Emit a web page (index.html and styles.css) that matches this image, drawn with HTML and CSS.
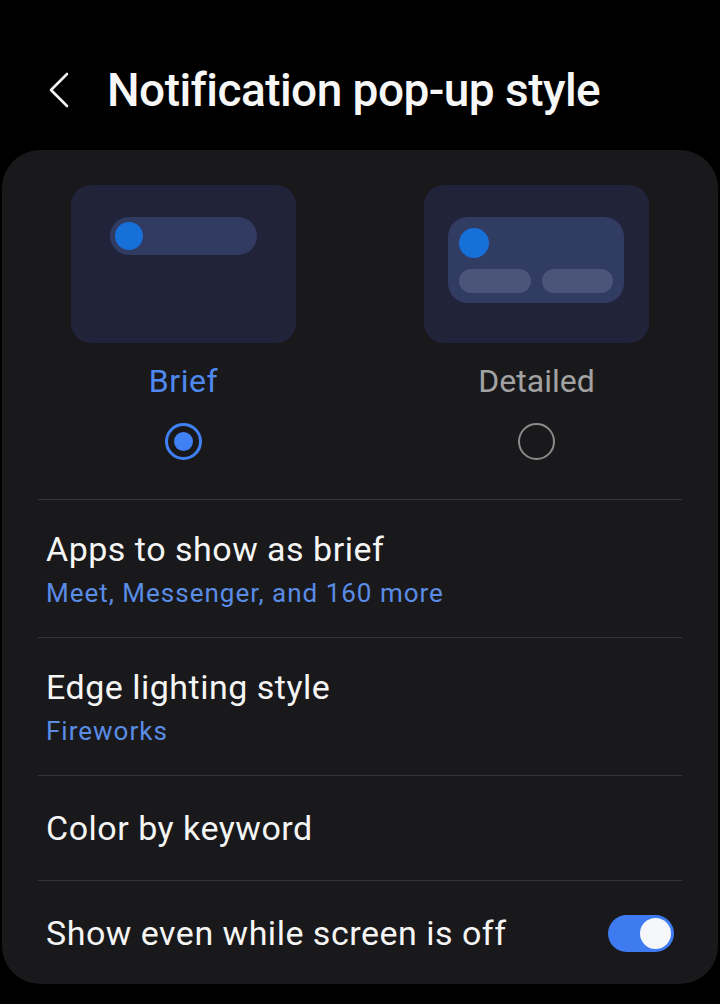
FILE: index.html
```html
<!DOCTYPE html>
<html>
	<head>
		<meta charset="UTF-8" />
		<title>Notification pop-up style</title>
		<link rel="stylesheet" href="styles.css">
	</head>
	<body>
		<div class="header">
			<svg class="back" width="22" height="36" viewBox="0 0 22 36">
				<polyline points="19,2 3,18 19,34" fill="none" stroke="#f2f2f2" stroke-width="2.6" stroke-linecap="round" stroke-linejoin="round" />
			</svg>
			<h1 class="title">Notification pop-up style</h1>
		</div>

		<div class="card">
			<div class="styles">
				<div class="option">
					<div class="preview">
						<div class="brief-pill">
							<span class="dot"></span>
						</div>
					</div>
					<div class="label label-active">Brief</div>
					<span class="radio radio-on"></span>
				</div>
				<div class="option">
					<div class="preview">
						<div class="detail-card">
							<span class="dot dot-big"></span>
							<div class="detail-btns">
								<span></span>
								<span></span>
							</div>
						</div>
					</div>
					<div class="label">Detailed</div>
					<span class="radio"></span>
				</div>
			</div>

			<div class="row">
				<div class="row-title">Apps to show as brief</div>
				<div class="row-sub">Meet, Messenger, and 160 more</div>
			</div>
			<div class="row">
				<div class="row-title">Edge lighting style</div>
				<div class="row-sub">Fireworks</div>
			</div>
			<div class="row row-single">
				<div class="row-title">Color by keyword</div>
			</div>
			<div class="row row-single row-switch">
				<div class="row-title">Show even while screen is off</div>
				<span class="switch"><span class="knob"></span></span>
			</div>
		</div>
	</body>
</html>
```

FILE: styles.css
```css
* {
	margin: 0;
	padding: 0;
	box-sizing: border-box;
}

body {
	background-color: #000;
	font-family: Roboto, "Noto Sans", sans-serif;
	color: #f7f7f7;
}

.header {
	height: 150px;
	padding: 30px 0 0 48px;
	display: flex;
	align-items: center;
}

.back {
	display: block;
	margin-right: 37px;
}

.title {
	font-size: 46px;
	font-weight: 500;
	letter-spacing: -0.55px;
	line-height: 1;
}

.card {
	margin: 0 2px;
	background-color: #19191b;
	border-radius: 38px;
	padding: 35px 36px 0;
}

.styles {
	display: flex;
	justify-content: center;
	gap: 128px;
	padding-bottom: 39px;
}

.option {
	width: 225px;
	display: flex;
	flex-direction: column;
	align-items: center;
}

.preview {
	width: 225px;
	height: 158px;
	border-radius: 20px;
	background-color: #21233a;
}

.brief-pill {
	width: 147px;
	height: 38px;
	margin: 32px 0 0 39px;
	border-radius: 19px;
	background-color: #313a60;
	padding: 5px;
}

.dot {
	display: block;
	width: 28px;
	height: 28px;
	border-radius: 50%;
	background-color: #176fd8;
}

.detail-card {
	width: 176px;
	height: 86px;
	margin: 32px 0 0 24px;
	border-radius: 20px;
	background-color: #313c63;
	padding: 11px 11px 0;
}

.dot-big {
	width: 30px;
	height: 30px;
}

.detail-btns {
	display: flex;
	gap: 11px;
	margin-top: 11px;
}

.detail-btns span {
	width: 72px;
	height: 24px;
	border-radius: 12px;
	background-color: #4a5579;
}

.label {
	margin-top: 19px;
	font-size: 32px;
	line-height: 38px;
	color: #a2a2a2;
}

.label-active {
	color: #4f88ee;
	letter-spacing: 0.6px;
}

.radio {
	display: block;
	margin-top: 23px;
	width: 37px;
	height: 37px;
	border-radius: 50%;
	border: 2.5px solid #8a8a8a;
}

.radio-on {
	border: 3.5px solid #3f80f5;
	padding: 5.5px;
}

.radio-on::after {
	content: "";
	display: block;
	width: 19px;
	height: 19px;
	border-radius: 50%;
	background-color: #3f80f5;
}

.row {
	border-top: 1px solid #343436;
	padding: 29px 8px 28px;
}

.row-title {
	font-size: 34px;
	line-height: 40px;
	letter-spacing: 0.5px;
	color: #f5f5f5;
}

.row-sub {
	margin-top: 8px;
	font-size: 26px;
	line-height: 32px;
	letter-spacing: 1px;
	color: #5a8ce6;
}

.row-single {
	padding-top: 32px;
	padding-bottom: 32px;
}

.row-switch {
	display: flex;
	align-items: center;
	justify-content: space-between;
	padding-right: 8px;
	padding-bottom: 31px;
}

.switch {
	width: 66px;
	height: 37px;
	border-radius: 19px;
	background-color: #3e7bf0;
	display: flex;
	justify-content: flex-end;
	align-items: center;
	padding-right: 3px;
}

.knob {
	width: 31px;
	height: 31px;
	border-radius: 50%;
	background-color: #f6f7fb;
}
```
